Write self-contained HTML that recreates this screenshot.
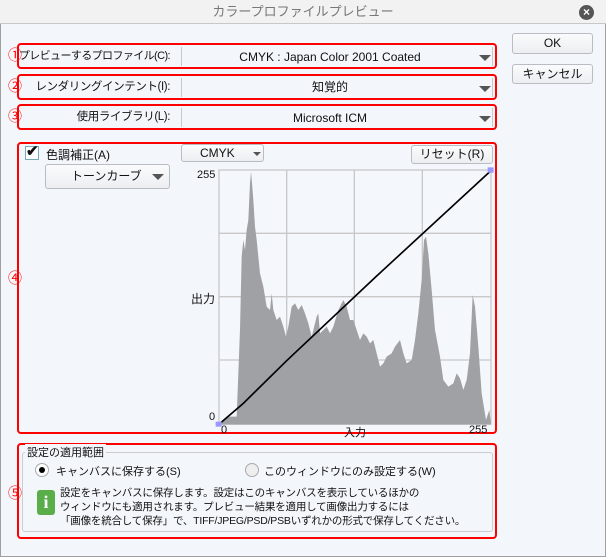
<!DOCTYPE html>
<html><head><meta charset="utf-8"><style>
*{margin:0;padding:0;box-sizing:border-box}
body{width:606px;height:557px;overflow:hidden;background:#f3f6fb;font-family:"Liberation Sans","Noto Sans CJK JP",sans-serif;font-size:12px;color:#111;position:relative}
.abs{position:absolute}
.title{left:0;top:0;width:606px;height:24px;background:#f2f2f2;border-bottom:1px solid #c8c8c8;text-align:center;line-height:24px;color:#777;font-size:13px}
.win{left:0;top:24px;width:606px;height:533px;border:1px solid #a0a0a0;border-top:none}
.red{border:2px solid #f00;border-radius:4px}
.num{color:#f00;font-size:14px}
.btn{border:1px solid #b9bcc2;border-radius:3px;background:linear-gradient(#fafbfc,#eceef1);text-align:center}
.sep{width:1px;background:#c8c8c8}
.tri{width:0;height:0;border-left:6px solid transparent;border-right:6px solid transparent;border-top:6px solid #555}
.lbl{font-size:11.5px;letter-spacing:-0.4px;text-align:right;width:162px;left:8px;line-height:16px}
.val{left:182px;width:296px;text-align:center;line-height:16px}
</style></head><body>
<div class="abs title">カラープロファイルプレビュー</div>
<div class="abs" style="left:579px;top:5px;width:15px;height:15px;border-radius:50%;background:#555;color:#fff;font-size:12px;line-height:15px;text-align:center;font-weight:bold">×</div>
<div class="abs win"></div>

<div class="abs btn" style="left:512px;top:33px;width:81px;height:21px;line-height:19px">OK</div>
<div class="abs btn" style="left:512px;top:64px;width:81px;height:20px;line-height:18px">キャンセル</div>

<div class="abs red" style="left:17px;top:43px;width:480px;height:26px"></div>
<div class="abs red" style="left:17px;top:74px;width:480px;height:26px"></div>
<div class="abs red" style="left:17px;top:104px;width:480px;height:26px"></div>
<div class="abs num" style="left:8px;top:45px">①</div>
<div class="abs num" style="left:8px;top:76px">②</div>
<div class="abs num" style="left:8px;top:106px">③</div>
<div class="abs lbl" style="top:48px;font-size:11px;letter-spacing:-0.6px">プレビューするプロファイル(C):</div>
<div class="abs lbl" style="top:79px">レンダリングインテント(I):</div>
<div class="abs lbl" style="top:109px">使用ライブラリ(L):</div>
<div class="abs sep" style="left:181px;top:47px;height:19px"></div>
<div class="abs sep" style="left:181px;top:78px;height:19px"></div>
<div class="abs sep" style="left:181px;top:108px;height:19px"></div>
<div class="abs sep" style="left:492px;top:47px;height:19px"></div>
<div class="abs sep" style="left:492px;top:78px;height:19px"></div>
<div class="abs sep" style="left:492px;top:108px;height:19px"></div>
<div class="abs val" style="top:49px">CMYK : Japan Color 2001 Coated</div>
<div class="abs val" style="top:79px">知覚的</div>
<div class="abs val" style="top:110px">Microsoft ICM</div>
<div class="abs tri" style="left:479px;top:55px"></div>
<div class="abs tri" style="left:479px;top:86px"></div>
<div class="abs tri" style="left:479px;top:116px"></div>

<div class="abs red" style="left:17px;top:142px;width:480px;height:292px"></div>
<div class="abs num" style="left:8px;top:268px">④</div>
<div class="abs" style="left:25px;top:146px;width:14px;height:14px;border:1px solid #7ab;background:#fff"></div>
<div class="abs" style="left:26px;top:142px;font-size:15px;font-weight:bold">✔</div>
<div class="abs" style="left:46px;top:146px">色調補正(A)</div>
<div class="abs btn" style="left:181px;top:144px;width:83px;height:18px;line-height:16px;text-align:left;padding-left:18px">CMYK</div>
<div class="abs tri" style="left:253px;top:152px;border-width:4px 4px 0"></div>
<div class="abs btn" style="left:45px;top:164px;width:125px;height:25px;line-height:23px;text-align:left;padding-left:25px">トーンカーブ</div>
<div class="abs tri" style="left:152px;top:174px"></div>
<div class="abs btn" style="left:411px;top:145px;width:82px;height:19px;line-height:17px">リセット(R)</div>
<div class="abs" style="left:197px;top:169px;font-size:11px">255</div>
<div class="abs" style="left:191px;top:290px">出力</div>
<div class="abs" style="left:209px;top:411px;font-size:11px">0</div>
<div class="abs" style="left:221px;top:424px;font-size:11px">0</div>
<div class="abs" style="left:344px;top:424px;font-size:11px">入力</div>
<div class="abs" style="left:469px;top:424px;font-size:11px">255</div>

<svg class="abs" style="left:210px;top:140px" width="296" height="300" viewBox="0 0 888 900">
<rect x="27" y="90" width="816" height="763" fill="#f4f7fc" stroke="#bbb" stroke-width="3"/>
<path d="M230 90V853M433 90V853M637 90V853M27 280H843M27 470H843M27 660H843" stroke="#c8c8c8" stroke-width="4"/>
<path fill="#a0a1a4" d="M27 853L50 830L80 830L85 700L90 570L95 350L100 300L105 330L110 270L115 240L120 130L123 95L126 130L130 180L135 260L140 300L150 400L160 440L170 500L180 510L185 460L190 510L200 540L210 530L220 560L228 590L235 560L245 500L255 490L265 510L275 495L285 520L295 550L305 590L320 530L325 520L330 580L340 570L350 560L360 580L370 560L385 510L400 480L410 500L420 540L430 540L440 570L450 600L460 580L470 590L480 610L490 600L500 640L510 680L520 670L530 650L545 640L555 620L570 600L580 640L590 670L605 660L615 600L625 520L635 420L642 300L648 290L655 340L665 450L675 570L690 650L700 720L715 740L730 730L740 700L750 715L760 750L770 720L780 640L788 465L795 500L805 620L815 760L828 840L838 810L843 853Z"/>
<path d="M30 850L100 790L230 662L500 408L843 92" stroke="#000" stroke-width="5" fill="none"/>
<rect x="17" y="845" width="18" height="15" fill="#99f"/>
<rect x="833" y="82" width="18" height="16" fill="#99f"/>
</svg>

<div class="abs red" style="left:17px;top:443px;width:480px;height:96px"></div>
<div class="abs num" style="left:8px;top:483px">⑤</div>
<div class="abs" style="left:22px;top:452px;width:471px;height:80px;border:1px solid #ccc;border-radius:3px"></div>
<div class="abs" style="left:25px;top:444px;background:#f3f6fb;padding:0 2px;font-size:11px">設定の適用範囲</div>
<div class="abs" style="left:35px;top:463px;width:14px;height:14px;border-radius:50%;border:1px solid #aaa;background:#fff"></div>
<div class="abs" style="left:39px;top:467px;width:6px;height:6px;border-radius:50%;background:#000"></div>
<div class="abs" style="left:56px;top:463px;font-size:11px">キャンバスに保存する(S)</div>
<div class="abs" style="left:245px;top:463px;width:14px;height:14px;border-radius:50%;border:1px solid #aaa;background:#eee"></div>
<div class="abs" style="left:264px;top:463px;font-size:11px">このウィンドウにのみ設定する(W)</div>
<div class="abs" style="left:37px;top:490px;width:18px;height:25px;border-radius:3px;background:#5aae4a;color:#fff;font-weight:bold;font-size:18px;text-align:center;line-height:25px;font-family:'Liberation Serif',serif">i</div>
<div class="abs" style="left:60px;top:486px;line-height:14px;font-size:10.5px;letter-spacing:-0.2px;white-space:nowrap">設定をキャンバスに保存します。設定はこのキャンバスを表示しているほかの<br>ウィンドウにも適用されます。プレビュー結果を適用して画像出力するには<br>「画像を統合して保存」で、TIFF/JPEG/PSD/PSBいずれかの形式で保存してください。</div>
</body></html>
